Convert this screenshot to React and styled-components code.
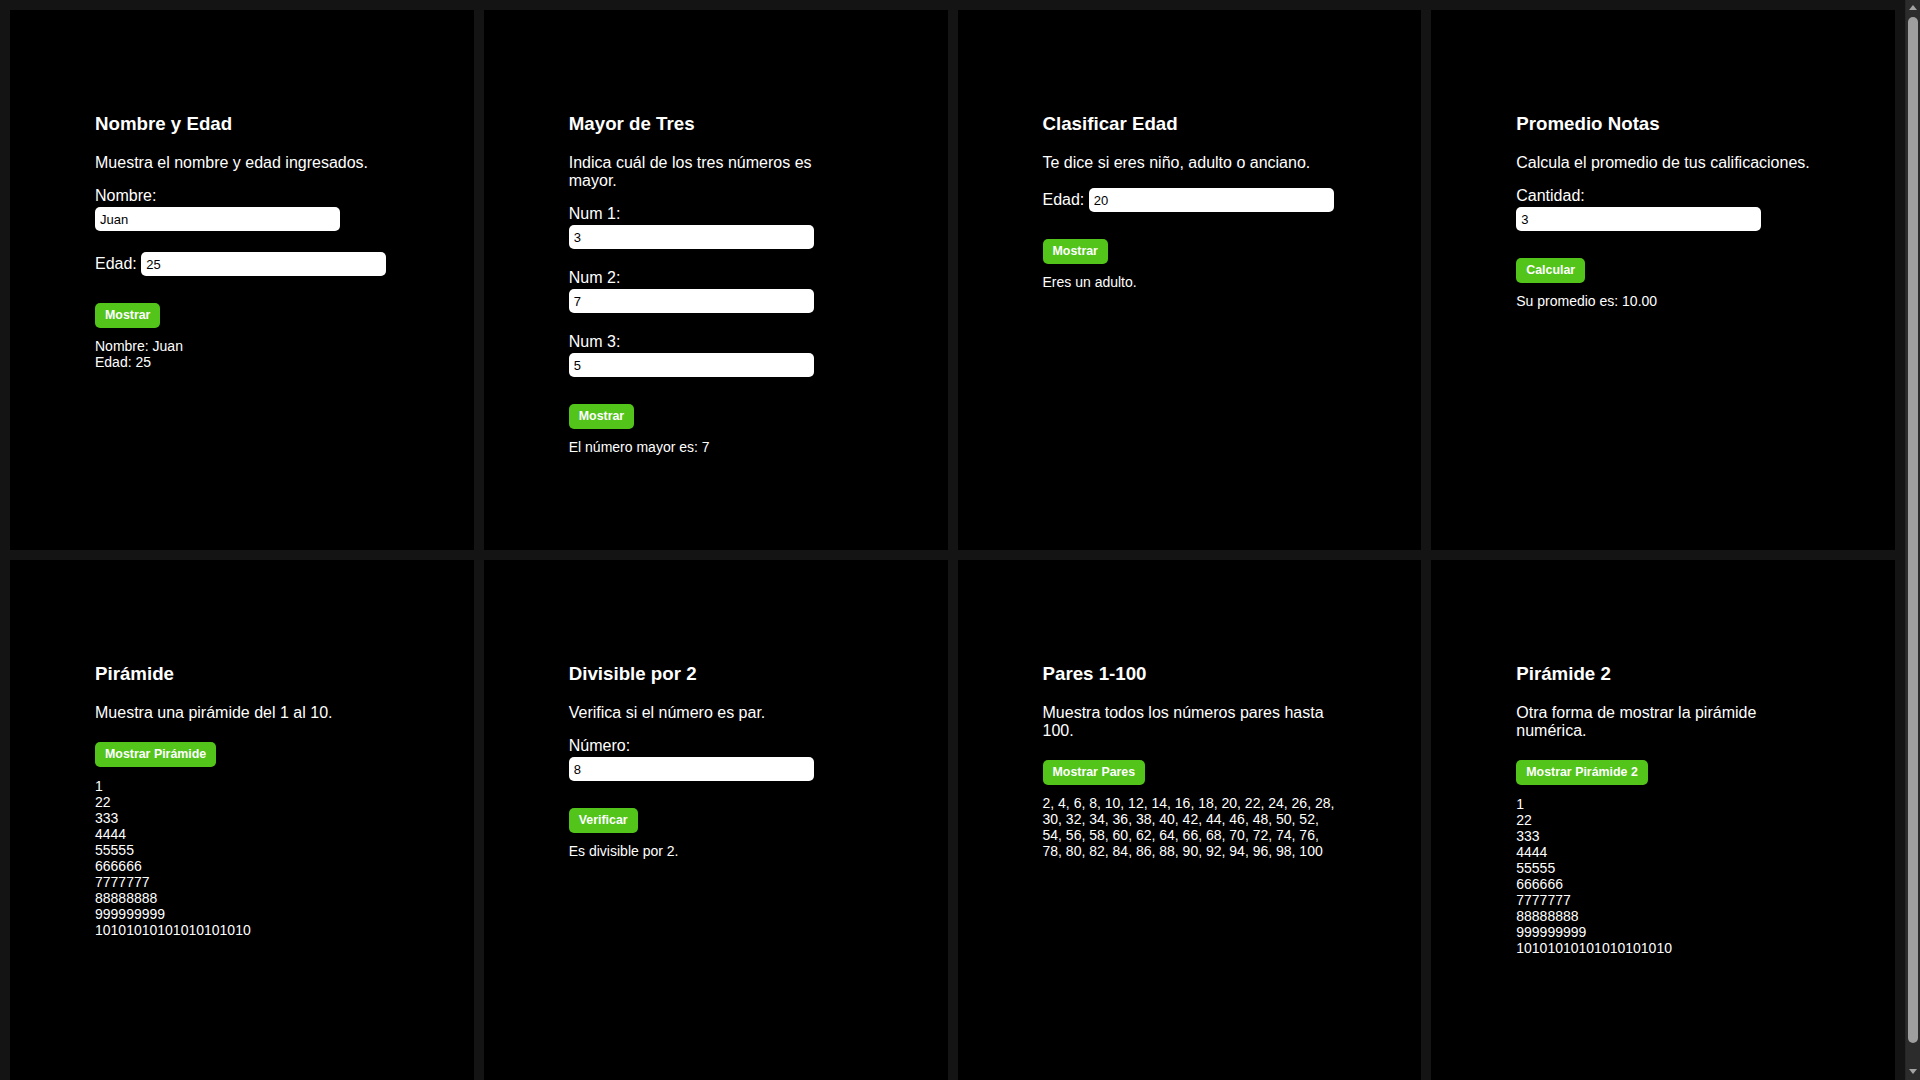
import styled, { createGlobalStyle } from "styled-components";

const pyramid = Array.from({ length: 10 }, (_, i) => String(i + 1).repeat(i + 1));
const evens = Array.from({ length: 50 }, (_, i) => (i + 1) * 2).join(", ");

function App() {
  return (
    <>
      <GlobalStyle />
      <Grid>
        <Card>
          <Title>Nombre y Edad</Title>
          <Description>Muestra el nombre y edad ingresados.</Description>
          <Field>
            <Label>Nombre:</Label>
            <Input defaultValue="Juan" />
          </Field>
          <Field $inline>
            <Label $inline>Edad:</Label>
            <Input defaultValue="25" />
          </Field>
          <Button>Mostrar</Button>
          <Result>
            Nombre: Juan
            <br />
            Edad: 25
          </Result>
        </Card>

        <Card>
          <Title>Mayor de Tres</Title>
          <Description>Indica cuál de los tres números es mayor.</Description>
          <Field>
            <Label>Num 1:</Label>
            <Input defaultValue="3" />
          </Field>
          <Field>
            <Label>Num 2:</Label>
            <Input defaultValue="7" />
          </Field>
          <Field>
            <Label>Num 3:</Label>
            <Input defaultValue="5" />
          </Field>
          <Button>Mostrar</Button>
          <Result>El número mayor es: 7</Result>
        </Card>

        <Card>
          <Title>Clasificar Edad</Title>
          <Description>Te dice si eres niño, adulto o anciano.</Description>
          <Field $inline>
            <Label $inline>Edad:</Label>
            <Input defaultValue="20" />
          </Field>
          <Button>Mostrar</Button>
          <Result>Eres un adulto.</Result>
        </Card>

        <Card>
          <Title>Promedio Notas</Title>
          <Description>Calcula el promedio de tus calificaciones.</Description>
          <Field>
            <Label>Cantidad:</Label>
            <Input defaultValue="3" />
          </Field>
          <Button>Calcular</Button>
          <Result>Su promedio es: 10.00</Result>
        </Card>

        <Card>
          <Title>Pirámide</Title>
          <Description>Muestra una pirámide del 1 al 10.</Description>
          <Button>Mostrar Pirámide</Button>
          <Result $gap={11}>
            {pyramid.map((row) => (
              <div key={row}>{row}</div>
            ))}
          </Result>
        </Card>

        <Card>
          <Title>Divisible por 2</Title>
          <Description>Verifica si el número es par.</Description>
          <Field>
            <Label>Número:</Label>
            <Input defaultValue="8" />
          </Field>
          <Button>Verificar</Button>
          <Result>Es divisible por 2.</Result>
        </Card>

        <Card>
          <Title>Pares 1-100</Title>
          <Description>Muestra todos los números pares hasta 100.</Description>
          <Button>Mostrar Pares</Button>
          <Result>{evens}</Result>
        </Card>

        <Card>
          <Title>Pirámide 2</Title>
          <Description>Otra forma de mostrar la pirámide numérica.</Description>
          <Button>Mostrar Pirámide 2</Button>
          <Result $gap={11}>
            {pyramid.map((row) => (
              <div key={row}>{row}</div>
            ))}
          </Result>
        </Card>
      </Grid>

      {/* barra de scroll oscura (dibujo) */}
      <ScrollTrack>
        <ArrowUp />
        <Thumb />
        <ArrowDown />
      </ScrollTrack>
    </>
  );
}

export default App;

// estilos globales
const GlobalStyle = createGlobalStyle`
  body {
    margin: 0;
    background: #141414;
    color: #fff;
    font-family: "Liberation Sans", Arial, sans-serif;
  }
`;

// grilla de tarjetas (a la derecha queda el ancho de la barra)
const Grid = styled.div`
  display: grid;
  grid-template-columns: repeat(4, 1fr);
  gap: 10px;
  padding: 10px 25px 10px 10px;
`;

// tarjeta
const Card = styled.div`
  box-sizing: border-box;
  height: 540px;
  padding: 103px 85px 0;
  background: #000;
  display: flex;
  flex-direction: column;
  align-items: flex-start;
  min-width: 0;
`;

// titulo
const Title = styled.h3`
  margin: 0 0 19px;
  font-size: 18.72px;
  font-weight: bold;
`;

// descripcion
const Description = styled.p`
  margin: 0 0 15px;
  font-size: 16px;
`;

// campo (label + input)
const Field = styled.div`
  display: ${(p) => (p.$inline ? "flex" : "block")};
  align-items: baseline;
  gap: 4.5px;
  padding-top: ${(p) => (p.$inline ? "1px" : "0")};
  margin-bottom: 20px;
`;

const Label = styled.label`
  display: ${(p) => (p.$inline ? "inline" : "block")};
  margin-bottom: ${(p) => (p.$inline ? "0" : "2px")};
  font-size: 16px;
`;

const Input = styled.input`
  display: block;
  box-sizing: border-box;
  width: 245px;
  height: 24px;
  padding: 0 5px;
  border: none;
  border-radius: 5px;
  background: #fff;
  color: #000;
  font-family: "Liberation Sans", Arial, sans-serif;
  font-size: 13px;
  outline: none;
`;

// boton verde
const Button = styled.button`
  display: block;
  margin-top: 6.5px;
  padding: 5px 10px;
  border: none;
  border-radius: 5px;
  background: #52c41a;
  color: #fff;
  font-family: "Liberation Sans", Arial, sans-serif;
  font-size: 12.4px;
  font-weight: bold;
  line-height: 15px;
  cursor: pointer;

  ${Description} + & {
    margin-top: 5px;
  }
`;

// resultado
const Result = styled.div`
  margin-top: ${(p) => p.$gap || 10}px;
  font-size: 14px;
  line-height: 16px;
`;

// barra de scroll
const ScrollTrack = styled.div`
  position: fixed;
  top: 0;
  right: 0;
  width: 15px;
  height: 100vh;
  background: #2c2c2c;
  border-left: 1px solid #262626;
  box-sizing: border-box;
`;

const ArrowUp = styled.div`
  position: absolute;
  top: 5px;
  left: 3px;
  width: 0;
  height: 0;
  border-left: 4px solid transparent;
  border-right: 4px solid transparent;
  border-bottom: 5px solid #a3a3a3;
`;

const ArrowDown = styled.div`
  position: absolute;
  bottom: 6px;
  left: 3px;
  width: 0;
  height: 0;
  border-left: 4px solid transparent;
  border-right: 4px solid transparent;
  border-top: 5px solid #a3a3a3;
`;

const Thumb = styled.div`
  position: absolute;
  top: 17px;
  left: 2px;
  width: 10px;
  height: 1026px;
  border-radius: 5px;
  background: #9f9f9f;
`;
